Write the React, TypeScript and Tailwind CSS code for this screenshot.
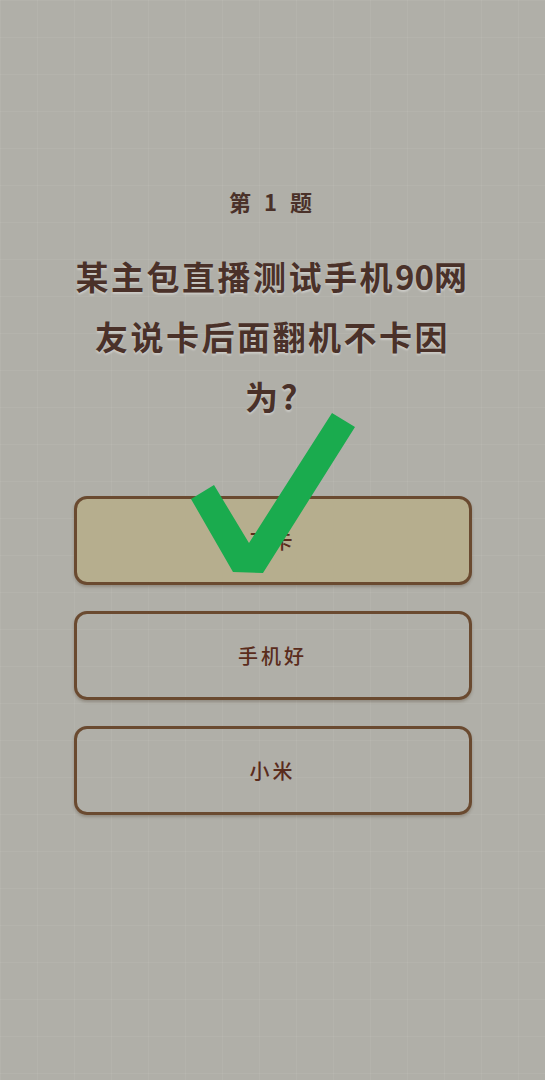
import React from "react";

const font = { fontFamily: '"Noto Sans CJK SC", "Noto Sans", sans-serif' };

function Option({ label, active }: { label: string; active?: boolean }) {
  return (
    <div
      className={`h-[89px] w-full rounded-[13px] border-[3px] border-[#6a4a30] flex items-center justify-center shadow-[0_2px_3px_rgba(60,40,20,0.25)] ${
        active ? "bg-[#b6ae8e]" : "bg-transparent"
      }`}
    >
      <span className="text-[20px] font-medium tracking-[3px] text-[#5a2c1c]">{label}</span>
    </div>
  );
}

export default function App() {
  return (
    <div
      style={font}
      className="relative h-[1080px] w-full overflow-hidden bg-[#b0afa8] bg-[linear-gradient(to_right,rgba(255,255,255,0.05)_1px,transparent_1px),linear-gradient(to_bottom,rgba(255,255,255,0.05)_1px,transparent_1px)] bg-[size:37px_37px]"
    >
      <div className="flex flex-col items-center pt-[185px]">
        <div className="h-[32px] leading-[32px] text-[22px] font-bold tracking-[4px] text-[#4a3129]">
          第 1 题
        </div>
        <div className="mt-[29px] flex w-[420px] flex-col items-center text-center text-[33px] font-bold leading-[60px] tracking-[2.5px] text-[#4a3129] [text-shadow:0_2px_2px_rgba(255,255,255,0.35)]">
          <div className="whitespace-nowrap">
            某主包直播测试手机<span className="tracking-[0px]">90</span>网
          </div>
          <div className="whitespace-nowrap">友说卡后面翻机不卡因</div>
          <div className="whitespace-nowrap">为?</div>
        </div>
        <div className="mt-[70px] flex w-[398px] flex-col gap-[26px]">
          <Option label="不卡" active />
          <Option label="手机好" />
          <Option label="小米" />
        </div>
      </div>
      <svg className="pointer-events-none absolute left-0 top-0" width="545" height="1080" viewBox="0 0 545 1080">
        <polygon
          points="191,499 214,485 249,543 332,413 355,427 263,573 233,572"
          fill="#1aab4e"
        />
      </svg>
    </div>
  );
}
